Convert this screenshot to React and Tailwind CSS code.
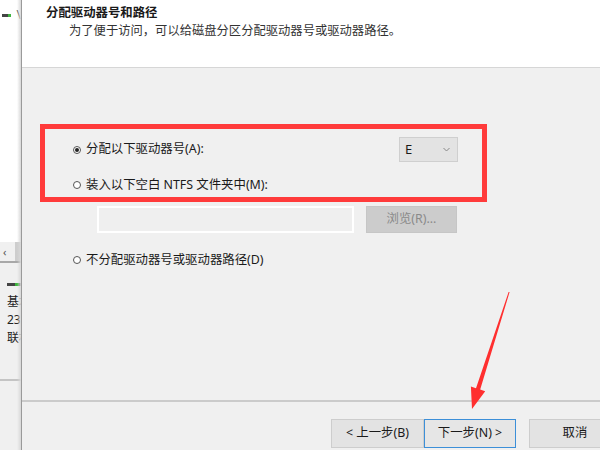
const font = { fontFamily: '"Noto Sans", "Noto Sans CJK SC", sans-serif' };

function Radio({ checked }) {
  return (
    <span className="flex h-[8px] w-[8px] shrink-0 items-center justify-center rounded-full border border-[#555] bg-white">
      {checked && <span className="h-[4px] w-[4px] rounded-full bg-[#222]" />}
    </span>
  );
}

function LeftStrip() {
  return (
    <div className="relative flex w-[21px] shrink-0 flex-col overflow-hidden bg-[#f0f0f0] text-[12px] text-[#222]">
      <div className="h-[242px] bg-white">
        <div className="flex items-center gap-[6px] pl-[2px] pt-[9px]">
          <span className="flex h-[3px] w-[11px] bg-[#444]">
            <span className="ml-auto h-[3px] w-[3px] bg-[#3fb43f]" />
          </span>
          <span className="leading-none text-[#555]">\</span>
        </div>
      </div>
      <div className="flex h-[21px] items-center border-b-2 border-[#a8a8a8] bg-[#f0f0f0]">
        <span className="pl-[3px] text-[11px] leading-none text-[#555]">‹</span>
        <span className="ml-auto h-[19px] w-[6px] bg-[#cdcdcd]" />
      </div>
      <div className="h-[118px] border-b-2 border-[#c4c4c4] pl-[7px] pt-[20px]">
        <span className="flex h-[3px] w-[16px] bg-[#444]">
          <span className="ml-[8px] h-[3px] w-[4px] bg-[#3fb43f]" />
        </span>
        <div className="mt-[7px] whitespace-nowrap leading-[18px]">基本</div>
        <div className="whitespace-nowrap leading-[18px]">232</div>
        <div className="whitespace-nowrap leading-[18px]">联机</div>
      </div>
      <div className="flex-1" />
      <div className="absolute right-0 top-0 h-full w-[4px] bg-gradient-to-r from-transparent to-[#d8d8d8]" />
    </div>
  );
}

export default function App() {
  return (
    <div className="relative flex h-[450px] w-[600px] overflow-hidden bg-[#f0f0f0]" style={font}>
      <LeftStrip />
      <div className="w-[1px] shrink-0 bg-[#9a9a9a]" />
      <div className="flex min-w-0 flex-1 flex-col overflow-hidden">
        {/* header */}
        <div className="h-[68px] shrink-0 border-b border-[#d6d6d6] bg-white pl-[24px] pt-[3px]">
          <div className="text-[12.4px] font-bold leading-[20px] text-[#1a1a1a]">分配驱动器号和路径</div>
          <div className="pl-[23px] text-[12.3px] leading-[16px] text-[#333]">为了便于访问，可以给磁盘分区分配驱动器号或驱动器路径。</div>
        </div>

        {/* body */}
        <div className="flex flex-1 flex-col pl-[51px] pt-[69px] text-[12.4px] text-[#1a1a1a]">
          <div className="flex h-[25px] w-[385px] items-center">
            <Radio checked />
            <span className="ml-[5px]">分配以下驱动器号(A):</span>
            <div className="ml-auto flex h-[25px] w-[59px] items-center border border-[#cfcfcf] bg-[#e3e3e3] pl-[5px] pr-[7px]">
              <span className="text-[13px]">E</span>
              <svg className="ml-auto" width="7" height="5" viewBox="0 0 7 5">
                <path d="M0.5 1 L3.5 4 L6.5 1" fill="none" stroke="#888" strokeWidth="1" />
              </svg>
            </div>
          </div>
          <div className="mt-[13px] flex h-[20px] items-center">
            <Radio />
            <span className="ml-[5px]">装入以下空白 NTFS 文件夹中(M):</span>
          </div>
          <div className="ml-[24px] mt-[11px] flex h-[27px] items-stretch">
            <div className="w-[257px] border-2 border-white bg-[#efefef]" />
            <div className="ml-[12px] flex w-[91px] items-center justify-center border border-[#c6c6c6] bg-[#cccccc] text-[#8a8a8a]">
              浏览(R)...
            </div>
          </div>
          <div className="mt-[17px] flex h-[20px] items-center">
            <Radio />
            <span className="ml-[5px]">不分配驱动器号或驱动器路径(D)</span>
          </div>
        </div>

        {/* footer */}
        <div className="h-[50px] shrink-0 border-t-2 border-[#cbcbcb] pl-[309px] pt-[17px]">
          <div className="flex h-[29px] text-[12.4px] text-[#1a1a1a]">
            <div className="flex w-[93px] shrink-0 items-center justify-center border border-[#cdcdcd] bg-[#e3e3e3]">&lt; 上一步(B)</div>
            <div className="flex w-[92px] shrink-0 items-center justify-center border border-[#3c8fd8] bg-[#e6e6e6]">下一步(N) &gt;</div>
            <div className="ml-[13px] flex w-[92px] shrink-0 items-center justify-center border border-[#cdcdcd] bg-[#e3e3e3]">取消</div>
          </div>
        </div>
      </div>

      {/* annotation: red box */}
      <div className="pointer-events-none absolute left-[40px] top-[124px] h-[78px] w-[447px] border-[5px] border-[#ff3b3b]" />

      {/* annotation: red arrow */}
      <svg className="pointer-events-none absolute left-0 top-0" width="600" height="450" viewBox="0 0 600 450">
        <polygon
          points="509.6,292 480.2,389.6 485.2,391.2 472,409 470.9,386.6 476,388.2 508.6,292"
          fill="#ff2f2f"
        />
      </svg>
    </div>
  );
}
